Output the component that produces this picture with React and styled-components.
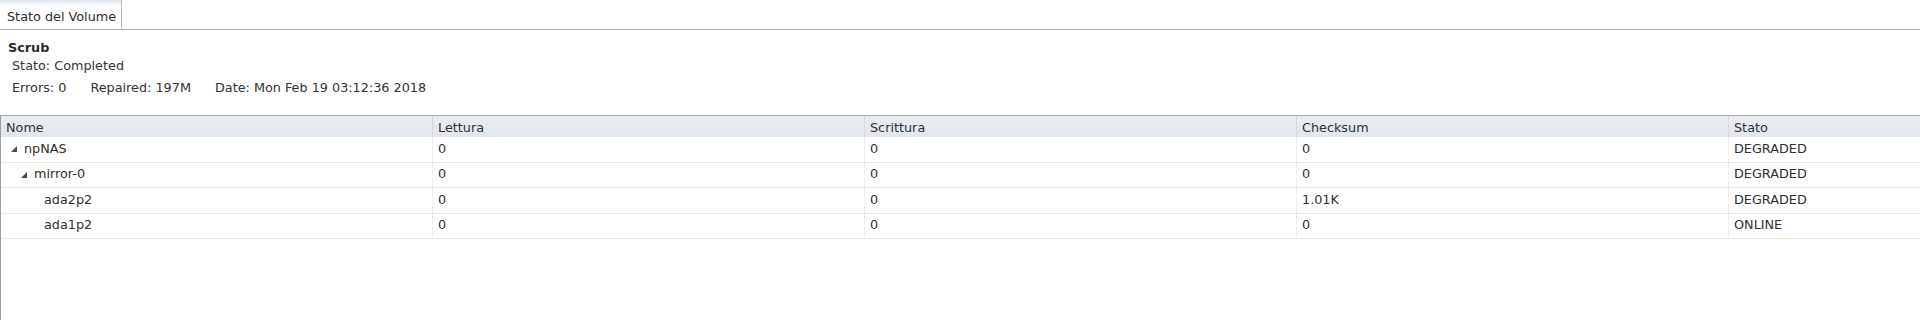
import React from "react";
import styled, { createGlobalStyle } from "styled-components";

const Global = createGlobalStyle`
  html, body { margin: 0; padding: 0; background: #ffffff; }
  body {
    font-family: "DejaVu Sans", Verdana, sans-serif;
    font-size: 12.8px;
    color: #333333;
  }
`;

const Page = styled.div`
  width: 1920px;
  height: 320px;
  display: flex;
  flex-direction: column;
  overflow: hidden;
`;

const TabBar = styled.div`
  height: 29px;
  display: flex;
  border-bottom: 1px solid #a9adb3;
  flex-shrink: 0;
`;

const Tab = styled.div`
  padding-left: 7px;
  padding-top: 10px;
  box-sizing: border-box;
  height: 29px;
  width: 122px;
  border-right: 1px solid #b7bcc3;
  background: linear-gradient(#dbe4ee 0px, #f4f7fa 4px, #ffffff 8px);
  line-height: 14px;
  color: #2e2e2e;
  white-space: nowrap;
`;

const Summary = styled.div`
  display: flex;
  flex-direction: column;
  padding: 10px 0 0 8px;
  height: 85px;
  box-sizing: border-box;
  flex-shrink: 0;
`;

const Title = styled.div`
  font-weight: bold;
  line-height: 15px;
  color: #2a2a2a;
`;

const InfoLine = styled.div`
  display: flex;
  gap: ${(p) => p.$gap || 0}px;
  padding-left: 4px;
  margin-top: ${(p) => p.$top}px;
  line-height: 15px;
  color: #333;
`;

const Grid = styled.div`
  flex: 1;
  border-top: 1px solid #a9adb3;
  border-left: 1px solid #9da1a6;
  display: flex;
  flex-direction: column;
`;

const cols = "431px 432px 432px 432px 1fr";

const HeaderRow = styled.div`
  display: grid;
  grid-template-columns: ${cols};
  height: 21px;
  background: linear-gradient(#e9edf2, #e2e7ed);
`;

const HeaderCell = styled.div`
  padding: 2px 0 0 5px;
  display: flex;
  align-items: center;
  border-left: ${(p) => (p.$first ? "none" : "1px solid #d3d8de")};
  color: #333;
  white-space: nowrap;
`;

const Row = styled.div`
  display: grid;
  grid-template-columns: ${cols};
  height: 25.5px;
  box-sizing: border-box;
  border-bottom: 1px solid #ece8e1;
`;

const Cell = styled.div`
  display: flex;
  align-items: center;
  padding-left: ${(p) => (p.$first ? 0 : 5)}px;
  padding-bottom: 2px;
  border-left: ${(p) => (p.$first ? "none" : "1px solid #efefef")};
  color: #2f2f2f;
  white-space: nowrap;
`;

const NameWrap = styled.div`
  display: flex;
  align-items: center;
  padding-left: ${(p) => 5 + p.$level * 10}px;
`;

const Expander = styled.span`
  width: ${(p) => (p.$leaf ? 28 : 18)}px;
  height: 14px;
  display: flex;
  align-items: center;
  padding-left: 5px;
  padding-top: 2px;
  box-sizing: border-box;
`;

const Arrow = () => (
  <svg width="6" height="6" viewBox="0 0 6 6">
    <polygon points="6,0 6,6 0,6" fill="#4a4a4a" />
  </svg>
);

const rows = [
  { name: "npNAS", level: 0, exp: true, r: "0", w: "0", c: "0", s: "DEGRADED" },
  { name: "mirror-0", level: 1, exp: true, r: "0", w: "0", c: "0", s: "DEGRADED" },
  { name: "ada2p2", level: 2, exp: false, r: "0", w: "0", c: "1.01K", s: "DEGRADED" },
  { name: "ada1p2", level: 2, exp: false, r: "0", w: "0", c: "0", s: "ONLINE" },
];

export default function App() {
  return (
    <Page>
      <Global />
      <TabBar>
        <Tab>Stato del Volume</Tab>
      </TabBar>
      <Summary>
        <Title>Scrub</Title>
        <InfoLine $top={3}>Stato: Completed</InfoLine>
        <InfoLine $top={7} $gap={24}>
          <span>Errors: 0</span>
          <span>Repaired: 197M</span>
          <span>Date: Mon Feb 19 03:12:36 2018</span>
        </InfoLine>
      </Summary>
      <Grid>
        <HeaderRow>
          <HeaderCell $first>Nome</HeaderCell>
          <HeaderCell>Lettura</HeaderCell>
          <HeaderCell>Scrittura</HeaderCell>
          <HeaderCell>Checksum</HeaderCell>
          <HeaderCell>Stato</HeaderCell>
        </HeaderRow>
        {rows.map((row) => (
          <Row key={row.name}>
            <Cell $first>
              <NameWrap $level={row.exp ? row.level : row.level - 1}>
                <Expander $leaf={!row.exp}>{row.exp && <Arrow />}</Expander>
                {row.name}
              </NameWrap>
            </Cell>
            <Cell>{row.r}</Cell>
            <Cell>{row.w}</Cell>
            <Cell>{row.c}</Cell>
            <Cell>{row.s}</Cell>
          </Row>
        ))}
      </Grid>
    </Page>
  );
}
